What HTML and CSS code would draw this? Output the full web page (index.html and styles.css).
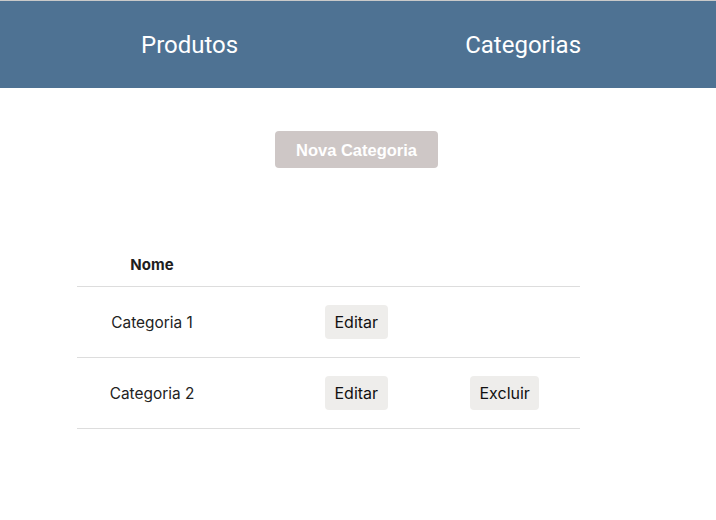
FILE: index.html
```html
<!DOCTYPE html>
<html>
<head>
<meta charset="utf-8">
<link rel="stylesheet" href="styles.css">
</head>
<body>
<header class="topbar">
  <nav class="nav">
    <a class="nav-link nav-produtos">Produtos</a>
    <a class="nav-link nav-categorias">Categorias</a>
  </nav>
</header>
<main class="content">
  <div class="actions">
    <button class="btn-new">Nova Categoria</button>
  </div>
  <div class="table">
    <div class="row head">
      <div class="cell name">Nome</div>
      <div class="cell"></div>
      <div class="cell"></div>
    </div>
    <div class="row">
      <div class="cell name">Categoria 1</div>
      <div class="cell edit"><button class="btn">Editar</button></div>
      <div class="cell"></div>
    </div>
    <div class="row">
      <div class="cell name">Categoria 2</div>
      <div class="cell edit"><button class="btn">Editar</button></div>
      <div class="cell"><button class="btn">Excluir</button></div>
    </div>
  </div>
</main>
</body>
</html>
```
FILE: styles.css
```css
html, body {
  margin: 0;
  padding: 0;
  background: #ffffff;
}
body {
  border-top: 1px solid #c9c9c9;
  font-family: Inter, "Liberation Sans", sans-serif;
  color: #222222;
}
.topbar {
  background: #4e7293;
  height: 87px;
}
.nav {
  display: flex;
  align-items: center;
  height: 100%;
  padding-left: 141px;
}
.nav-link {
  font-family: Roboto, sans-serif;
  font-size: 24px;
  color: #ffffff;
  text-decoration: none;
}
.nav-categorias {
  margin-left: 227px;
}
.content {
  padding-top: 43px;
}
.actions {
  display: flex;
  justify-content: center;
  margin-left: -3px;
}
.btn-new {
  width: 163px;
  height: 37px;
  border: none;
  border-radius: 4px;
  background: #cec7c6;
  color: #ffffff;
  font-family: "Liberation Sans", Arial, sans-serif;
  font-weight: bold;
  font-size: 16.5px;
  padding: 1px 0 0;
}
.table {
  margin: 75px 0 0 77px;
  width: 503px;
}
.row {
  display: grid;
  grid-template-columns: 150px 243px 110px;
  align-items: center;
  height: 70px;
  border-bottom: 1px solid #dddddd;
}
.row.head {
  height: 43px;
}
.head .name {
  font-weight: bold;
  font-size: 15px;
  color: #1e1e1e;
}
.cell {
  font-size: 15.4px;
}
.name {
  text-align: center;
}
.edit {
  padding-left: 98px;
}
.btn {
  border: none;
  border-radius: 4px;
  background: #eeedeb;
  color: #111111;
  font-family: Inter, "Liberation Sans", sans-serif;
  font-size: 16px;
  height: 34px;
  padding: 0 9.5px;
}
```
